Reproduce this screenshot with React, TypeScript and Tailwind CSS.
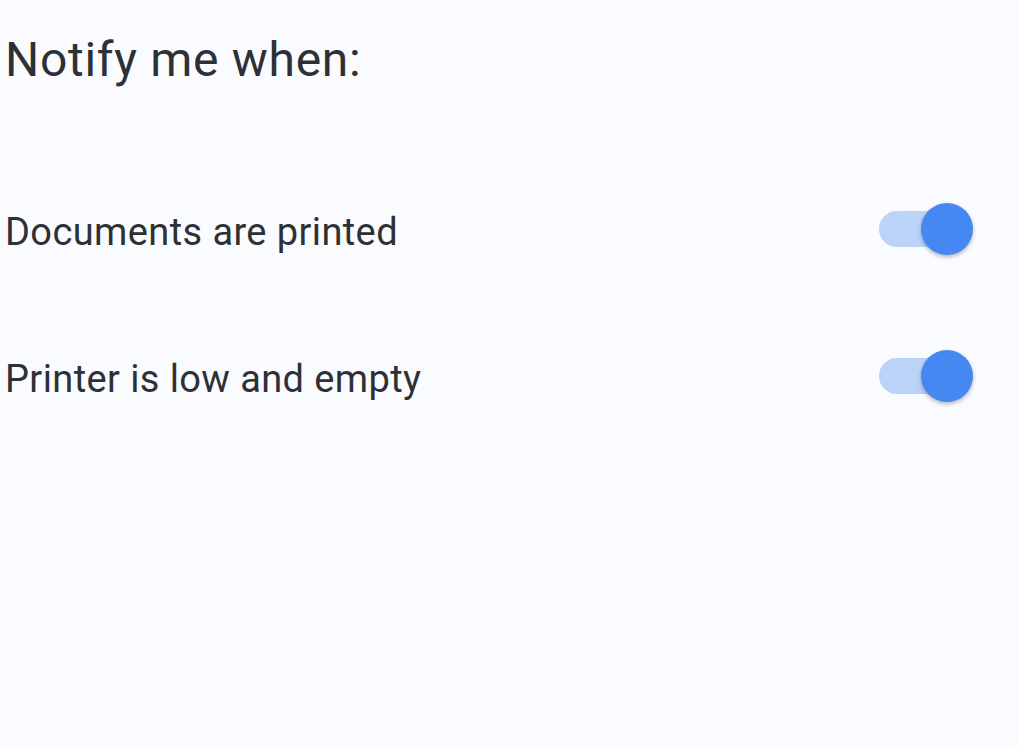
import { useState } from "react";

function Toggle({ on, onChange }: { on: boolean; onChange: (v: boolean) => void }) {
  return (
    <button
      type="button"
      onClick={() => onChange(!on)}
      className="relative h-[52px] w-[94px] shrink-0"
    >
      <span className="absolute left-0 top-[8px] h-[36px] w-[80px] rounded-full bg-[#bcd3f8]" />
      <span
        className={`absolute top-0 h-[52px] w-[52px] rounded-full bg-[#4688f2] shadow-[0_2px_4px_rgba(0,0,0,0.28)] ${
          on ? "left-[42px]" : "left-0"
        }`}
      />
    </button>
  );
}

export default function App() {
  const [printed, setPrinted] = useState(true);
  const [low, setLow] = useState(true);

  const rows = [
    { label: "Documents are printed", on: printed, set: setPrinted },
    { label: "Printer is low and empty", on: low, set: setLow },
  ];

  return (
    <div className="h-[749px] w-full bg-[#fafbfe] font-['Roboto',sans-serif] text-[#2d3136]">
      <div className="pl-[5px] pr-[45px] pt-[30px]">
        <h1 className="text-[48px] leading-[60px] tracking-[0.7px]">Notify me when:</h1>
        <div className="mt-[110px] flex flex-col gap-[89px]">
          {rows.map((r) => (
            <div key={r.label} className="flex items-center justify-between">
              <span className="mt-[6px] text-[38px] leading-[52px] tracking-[0.4px]">{r.label}</span>
              <Toggle on={r.on} onChange={r.set} />
            </div>
          ))}
        </div>
      </div>
    </div>
  );
}
